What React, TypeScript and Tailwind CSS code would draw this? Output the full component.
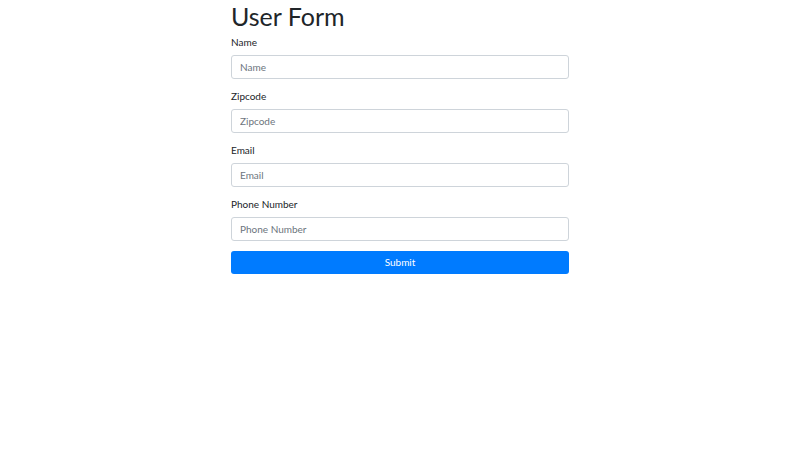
import React from "react";

const fields = ["Name", "Zipcode", "Email", "Phone Number"];

export default function App() {
  return (
    <div className="min-h-[450px] w-full bg-white text-[#212529]" style={{ fontFamily: 'Lato, "Noto Sans", sans-serif' }}>
      <div className="mx-auto w-[338px]">
        <h1 className="m-0 h-[35px] text-[25px] leading-[33px] font-normal text-[#212529]">User Form</h1>
        <form onSubmit={(e) => e.preventDefault()}>
          {fields.map((f) => (
            <div key={f} className="mb-[10px]">
              <label className="block mb-[5px] text-[10px] leading-[15px] text-[#212529]">{f}</label>
              <input
                placeholder={f}
                className="block w-full h-[24px] px-[8px] border border-[#ced4da] rounded-[3px] text-[10px] text-[#495057] placeholder:text-[#6c757d] outline-none"
              />
            </div>
          ))}
          <button type="submit" className="block w-full h-[23px] rounded-[3px] bg-[#007bff] text-white text-[10px] leading-[23px]">
            Submit
          </button>
        </form>
      </div>
    </div>
  );
}
